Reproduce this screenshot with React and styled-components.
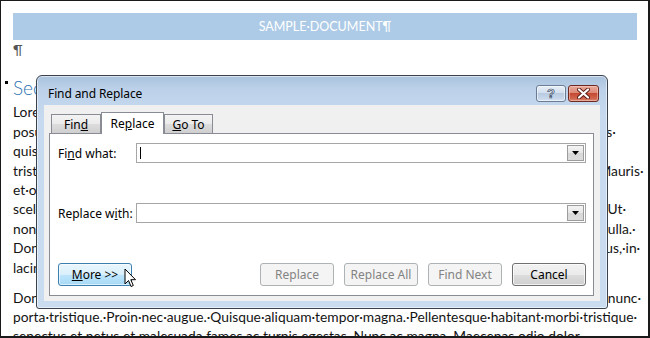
import React from 'react';
import styled, { createGlobalStyle, css } from 'styled-components';

const GlobalStyle = createGlobalStyle`
  html, body { margin: 0; padding: 0; background: #fff; }
  body { width: 650px; height: 338px; overflow: hidden; }
`;

const Page = styled.div`
  position: relative;
  width: 650px;
  height: 338px;
  box-sizing: border-box;
  border-style: solid;
  border-color: #1a1a1a;
  border-width: 1px 2px 2px 1px;
  overflow: hidden;
  background: #fff;
  font-family: Lato, "Liberation Sans", sans-serif;
  color: #141414;
`;

const Doc = styled.div`
  padding: 12px 11px 0 12px;
`;

const HeaderBar = styled.div`
  height: 27px;
  background: #adcbe6;
  color: #fff;
  display: flex;
  align-items: center;
  justify-content: center;
  font-size: 12.5px;
`;

const Line = styled.div`
  white-space: nowrap;
  height: 19.4px;
  line-height: 19.4px;
  font-size: 13.8px;
`;

const Pilcrow = styled(Line)`
  color: #555;
`;

const Heading = styled.div`
  position: relative;
  margin-top: 16px;
  height: 25px;
  line-height: 25px;
  font-size: 19px;
  font-weight: 300;
  color: #2e74b5;
  white-space: nowrap;
  &::before {
    content: '';
    position: absolute;
    left: -8px;
    top: 6px;
    width: 3px;
    height: 3px;
    background: #000;
  }
`;

const Para = styled.div`
  margin-top: ${p => p.$first ? '2px' : '0'};
  margin-bottom: 10.6px;
`;

const Dialog = styled.div`
  position: absolute;
  left: 35px;
  top: 74px;
  width: 572px;
  height: 234px;
  box-sizing: border-box;
  border: 1px solid #3a424e;
  border-radius: 6px 6px 3px 3px;
  background: linear-gradient(180deg, #aac2dd 0px, #bdd2ea 14px, #c6d9ee 40px, #cadcf0 100%);
  box-shadow: inset 0 0 0 1px rgba(255, 255, 255, 0.55);
  display: flex;
  flex-direction: column;
  font-family: "Noto Sans", "Open Sans", sans-serif;
  font-size: 12px;
  color: #000;
`;

const TitleBar = styled.div`
  height: 29px;
  flex-shrink: 0;
  box-sizing: border-box;
  padding: 6px 8px 0 11px;
  display: flex;
  align-items: center;
`;

const Title = styled.div`
  flex: 1;
  font-size: 12px;
  letter-spacing: -0.1px;
`;

const CaptionButtons = styled.div`
  display: flex;
  gap: 2px;
`;

const CaptionButton = styled.div`
  width: ${p => p.$w}px;
  height: 17px;
  box-sizing: border-box;
  border-radius: 3px;
  display: flex;
  align-items: center;
  justify-content: center;
  ${p => p.$close ? css`
    border: 1px solid #6e2a22;
    background: linear-gradient(180deg, #e9a99a 0%, #dc8a78 45%, #c64a33 50%, #d06750 85%, #dc8a72 100%);
    box-shadow: inset 0 0 0 1px rgba(255, 220, 210, 0.45);
  ` : css`
    border: 1px solid #6b7d94;
    background: linear-gradient(180deg, #e8eff8 0%, #d3dfee 45%, #b9cbe1 50%, #c8d8ec 85%, #d6e3f3 100%);
    box-shadow: inset 0 0 0 1px rgba(255, 255, 255, 0.5);
  `}
`;

const HelpGlyph = styled.span`
  font-family: "Liberation Sans", sans-serif;
  font-size: 13px;
  font-weight: bold;
  line-height: 1;
  color: #e9f0f8;
  -webkit-text-stroke: 0.7px #3a4a60;
`;

const Client = styled.div`
  flex: 1;
  margin: 0 7px 7px 7px;
  background: #f0f0f0;
  padding: 7px 6px 5px 5px;
  display: flex;
  flex-direction: column;
`;

const TabRow = styled.div`
  display: flex;
  align-items: flex-end;
  height: 21px;
  padding-left: 2px;
  position: relative;
  z-index: 1;
`;

const Tab = styled.div`
  box-sizing: border-box;
  width: ${p => p.$w}px;
  display: flex;
  justify-content: center;
  border: 1px solid #898c95;
  border-bottom: none;
  ${p => p.$active ? css`
    height: 22px;
    margin-bottom: -1px;
    background: #fff;
    padding-top: 2px;
    align-items: flex-start;
  ` : css`
    height: 19px;
    background: linear-gradient(180deg, #f3f3f3 0%, #ebebeb 50%, #dddddd 51%, #cfcfcf 100%);
    align-items: center;
    padding-top: 1px;
  `}
`;

const Panel = styled.div`
  flex: 1;
  border: 1px solid #898c95;
  background: #fff;
  padding: 9px 7px 9px 8px;
  display: flex;
  flex-direction: column;
`;

const FieldRow = styled.div`
  display: flex;
  align-items: center;
  height: 20px;
  margin-top: ${p => p.$gap || 0}px;
`;

const Label = styled.div`
  width: 78px;
  flex-shrink: 0;
`;

const Combo = styled.div`
  flex: 1;
  height: 20px;
  box-sizing: border-box;
  border: 1px solid #a6a6a6;
  background: #fff;
  padding: 1px;
  display: flex;
  align-items: center;
  justify-content: space-between;
`;

const Caret = styled.span`
  width: 1px;
  height: 12px;
  margin-left: 2px;
  background: #000;
`;

const DropButton = styled.div`
  width: 17px;
  height: 16px;
  box-sizing: border-box;
  border: 1px solid #9c9c9c;
  background: linear-gradient(180deg, #f4f4f4 0%, #e6e6e6 50%, #d8d8d8 51%, #dcdcdc 100%);
  display: flex;
  align-items: center;
  justify-content: center;
`;

const ButtonRow = styled.div`
  margin-top: auto;
  display: flex;
  align-items: center;
  gap: 10px;
`;

const Spacer = styled.div`
  flex: 1;
`;

const ButtonWrap = styled.div`
  position: relative;
`;

const Button = styled.div`
  width: 74px;
  height: 23px;
  box-sizing: border-box;
  border-radius: 3px;
  display: flex;
  align-items: center;
  justify-content: center;
  font-size: 12px;
  ${p => p.$variant === 'hover' && css`
    border: 1px solid #3c7fb1;
    background: linear-gradient(180deg, #eaf6fd 0%, #d9f0fc 50%, #bee6fd 51%, #a7d9f5 100%);
    box-shadow: inset 0 0 0 1px rgba(255, 255, 255, 0.6);
    color: #000;
  `}
  ${p => p.$variant === 'disabled' && css`
    border: 1px solid #adb2b5;
    background: #f4f4f4;
    color: #838383;
  `}
  ${p => p.$variant === 'normal' && css`
    border: 1px solid #707070;
    background: linear-gradient(180deg, #f2f2f2 0%, #ebebeb 50%, #dddddd 51%, #cfcfcf 100%);
    box-shadow: inset 0 0 0 1px rgba(255, 255, 255, 0.7);
    color: #000;
  `}
`;

const U = styled.span`
  text-decoration: underline;
  text-underline-offset: 1px;
`;

const Pointer = styled.svg`
  position: absolute;
  left: 66px;
  top: 5px;
`;

const docLines1 = [
  'Lorem·ipsum·dolor·sit·amet,·consectetuer·adipiscing·elit.·Maecenas·porttitor·congue·massa.·Fusce·',
  'posuere,·magna·sed·pulvinar·ultricies,·purus·lectus·malesuada·libero,·sit·amet·commodo·magna·eros·',
  'quis·urna.·Nunc·viverra·imperdiet·enim.·Fusce·est.·Vivamus·a·tellus.·Pellentesque·habitant·morbi·',
  'tristique·senectus·et·netus·et·malesuada·fames·ac·turpis·egestas.·Proin·pharetra·nonummy·pede.·Mauris·',
  'et·orci.·Aenean·nec·lorem.·In·porttitor.·Donec·laoreet·nonummy·augue.·Suspendisse·dui·purus,·',
  'scelerisque·at,·vulputate·vitae,·pretium·mattis,·nunc.·Mauris·eget·neque·at·sem·venenatis·eleifend.·Ut·',
  'nonummy.·Fusce·aliquet·pede·non·pede.·Suspendisse·dapibus·lorem·pellentesque·magna.·Integer·nulla.·',
  'Donec·blandit·feugiat·ligula.·Donec·hendrerit,·felis·et·imperdiet·euismod,·purus·ipsum·pretium·metus,·in·',
  'lacinia·nulla·nisl·eget·sapien.¶',
];

const docLines2 = [
  'Donec·ut·est·in·lectus·consequat·consequat.·Etiam·eget·dui.·Aliquam·erat·volutpat.·Sed·at·lorem·in·nunc·',
  'porta·tristique.·Proin·nec·augue.·Quisque·aliquam·tempor·magna.·Pellentesque·habitant·morbi·tristique·',
  'senectus·et·netus·et·malesuada·fames·ac·turpis·egestas.·Nunc·ac·magna.·Maecenas·odio·dolor,·',
];

function CloseGlyph() {
  return (
    <svg width="13" height="11" viewBox="0 0 13 11">
      <path d="M2 1.5 L11 9.5 M11 1.5 L2 9.5" stroke="#5a1d16" strokeWidth="4" strokeLinecap="round" />
      <path d="M2 1.5 L11 9.5 M11 1.5 L2 9.5" stroke="#ffffff" strokeWidth="2.2" strokeLinecap="round" />
    </svg>
  );
}

function DropArrow() {
  return (
    <svg width="7" height="4" viewBox="0 0 7 4">
      <path d="M0 0 H7 L3.5 4 Z" fill="#000" />
    </svg>
  );
}

function ComboBox({ caret }) {
  return (
    <Combo>
      {caret ? <Caret /> : <span />}
      <DropButton><DropArrow /></DropButton>
    </Combo>
  );
}

export default function App() {
  return (
    <>
      <GlobalStyle />
      <Page>
        <Doc>
          <HeaderBar>SAMPLE·DOCUMENT¶</HeaderBar>
          <Pilcrow>¶</Pilcrow>
          <Heading>Section·Heading¶</Heading>
          <Para $first>
            {docLines1.map((t, i) => <Line key={i}>{t}</Line>)}
          </Para>
          <Para>
            {docLines2.map((t, i) => <Line key={i}>{t}</Line>)}
          </Para>
        </Doc>

        <Dialog>
          <TitleBar>
            <Title>Find and Replace</Title>
            <CaptionButtons>
              <CaptionButton $w={30}><HelpGlyph>?</HelpGlyph></CaptionButton>
              <CaptionButton $w={31} $close><CloseGlyph /></CaptionButton>
            </CaptionButtons>
          </TitleBar>
          <Client>
            <TabRow>
              <Tab $w={50}>Fin<U>d</U></Tab>
              <Tab $w={63} $active>Re<U>p</U>lace</Tab>
              <Tab $w={49}><U>G</U>o To</Tab>
            </TabRow>
            <Panel>
              <FieldRow>
                <Label>Fi<U>n</U>d what:</Label>
                <ComboBox caret />
              </FieldRow>
              <FieldRow $gap={40}>
                <Label>Replace w<U>i</U>th:</Label>
                <ComboBox />
              </FieldRow>
              <ButtonRow>
                <ButtonWrap>
                  <Button $variant="hover"><span><U>M</U>ore &gt;&gt;</span></Button>
                  <Pointer width="13" height="20" viewBox="0 0 13 20">
                    <path d="M1 1 L1 16 L4.5 12.5 L7 18.5 L9.3 17.5 L6.8 11.7 L11.5 11.7 Z" fill="#fff" stroke="#000" strokeWidth="1" strokeLinejoin="miter" />
                  </Pointer>
                </ButtonWrap>
                <Spacer />
                <Button $variant="disabled">Replace</Button>
                <Button $variant="disabled">Replace All</Button>
                <Button $variant="disabled">Find Next</Button>
                <Button $variant="normal">Cancel</Button>
              </ButtonRow>
            </Panel>
          </Client>
        </Dialog>
      </Page>
    </>
  );
}
